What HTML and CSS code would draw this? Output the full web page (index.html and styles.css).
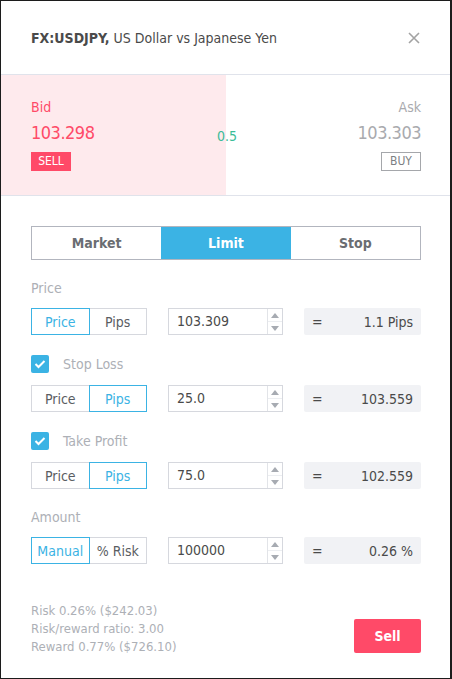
FILE: index.html
```html
<!DOCTYPE html>
<html lang="en">
<head>
<meta charset="utf-8">
<title>FX:USDJPY order</title>
<link rel="stylesheet" href="styles.css">
</head>
<body>
<div class="dialog">
  <header class="header">
    <div class="title"><b>FX:USDJPY,</b> US Dollar vs Japanese Yen</div>
    <svg class="close" width="12" height="12" viewBox="0 0 12 12"><path d="M1 1L11 11M11 1L1 11" stroke="#a3a3a3" stroke-width="1.6" fill="none"/></svg>
  </header>
  <section class="quote">
    <div class="side bid">
      <div class="q-label">Bid</div>
      <div class="q-price">103.298</div>
      <span class="badge sell-badge">SELL</span>
    </div>
    <div class="side ask">
      <div class="q-label">Ask</div>
      <div class="q-price">103.303</div>
      <span class="badge buy-badge">BUY</span>
    </div>
    <div class="spread">0.5</div>
  </section>
  <section class="form">
    <div class="tabs">
      <div class="tab">Market</div>
      <div class="tab active">Limit</div>
      <div class="tab">Stop</div>
    </div>

    <div class="label">Price</div>
    <div class="row">
      <div class="toggle"><span class="tg on">Price</span><span class="tg">Pips</span></div>
      <div class="input"><span class="val">103.309</span><span class="spin"><i class="up"></i><i class="down"></i></span></div>
      <div class="result"><span>=</span><span>1.1 Pips</span></div>
    </div>

    <div class="check-row"><span class="check"><svg width="12" height="10" viewBox="0 0 12 10"><path d="M1.5 5L4.5 8L10.5 2" stroke="#fff" stroke-width="2" fill="none"/></svg></span><span class="check-label">Stop Loss</span></div>
    <div class="row tight">
      <div class="toggle"><span class="tg">Price</span><span class="tg on">Pips</span></div>
      <div class="input"><span class="val">25.0</span><span class="spin"><i class="up"></i><i class="down"></i></span></div>
      <div class="result"><span>=</span><span>103.559</span></div>
    </div>

    <div class="check-row"><span class="check"><svg width="12" height="10" viewBox="0 0 12 10"><path d="M1.5 5L4.5 8L10.5 2" stroke="#fff" stroke-width="2" fill="none"/></svg></span><span class="check-label">Take Profit</span></div>
    <div class="row tight">
      <div class="toggle"><span class="tg">Price</span><span class="tg on">Pips</span></div>
      <div class="input"><span class="val">75.0</span><span class="spin"><i class="up"></i><i class="down"></i></span></div>
      <div class="result"><span>=</span><span>102.559</span></div>
    </div>

    <div class="label">Amount</div>
    <div class="row">
      <div class="toggle"><span class="tg on">Manual</span><span class="tg">% Risk</span></div>
      <div class="input"><span class="val">100000</span><span class="spin"><i class="up"></i><i class="down"></i></span></div>
      <div class="result"><span>=</span><span>0.26 %</span></div>
    </div>

    <div class="footer">
      <div class="info">
        <div>Risk 0.26% ($242.03)</div>
        <div>Risk/reward ratio: 3.00</div>
        <div>Reward 0.77% ($726.10)</div>
      </div>
      <button class="sell-btn">Sell</button>
    </div>
  </section>
</div>
</body>
</html>
```
FILE: styles.css
```css
* { box-sizing: border-box; }
html, body { margin: 0; padding: 0; background: #fff; }
body {
  font-family: "DejaVu Sans Condensed", Tahoma, "DejaVu Sans", sans-serif;
  font-size: 14px;
  color: #4a4a4a;
}
.dialog {
  width: 452px;
  height: 679px;
  border: 1px solid #1c1c1c;
  border-right-width: 2px;
  background: #fff;
}
.header {
  height: 74px;
  border-bottom: 1px solid #e0e3eb;
  display: flex;
  align-items: center;
  justify-content: space-between;
  padding: 0 30px 0 30px;
}
.title { font-size: 14px; color: #4a4a4a; }
.title b { font-weight: bold; }
.close { display: block; }

.quote {
  position: relative;
  display: flex;
  height: 121px;
  border-bottom: 1px solid #e0e3eb;
}
.side { flex: 0 0 225px; padding-top: 22px; }
.bid { background: #feeaed; padding-left: 30px; }
.ask { flex: 1; text-align: right; padding-right: 29px; }
.q-label { line-height: 20px; height: 20px; }
.q-price { font-size: 18px; line-height: 24px; margin-top: 4px; height: 24px; letter-spacing: -0.5px; }
.bid .q-label, .bid .q-price { color: #ff4a68; }
.ask .q-label, .ask .q-price { color: #a9aaae; }
.badge {
  display: inline-block;
  margin-top: 7px;
  width: 40px;
  height: 19px;
  line-height: 19px;
  font-size: 12px;
  text-align: center;
}
.sell-badge { background: #ff4a68; color: #fff; }
.buy-badge { border: 1px solid #a5a7ab; color: #7d7f83; line-height: 17px; }
.spread {
  position: absolute;
  left: 216px;
  top: 51px;
  width: 20px;
  text-align: center;
  color: #3cbc98;
  font-size: 14px;
  line-height: 20px;
}

.form { padding: 30px 29px 0 30px; }
.tabs {
  display: grid;
  grid-template-columns: repeat(3, 1fr);
  height: 34px;
  border: 1px solid #b2b5be;
}
.tab {
  display: flex;
  align-items: center;
  justify-content: center;
  font-weight: bold;
  color: #6a6d72;
}
.tab.active { background: #3bb3e4; color: #fff; }

.label {
  margin-top: 18px;
  height: 20px;
  line-height: 20px;
  color: #adb0b6;
}
.row {
  margin-top: 10px;
  display: grid;
  grid-template-columns: 116px 115px 117px;
  column-gap: 21px;
  height: 27px;
}
.row.tight { margin-top: 12px; }
.toggle { display: flex; height: 27px; }
.tg {
  flex: 1;
  display: flex;
  align-items: center;
  justify-content: center;
  border: 1px solid #d6d8de;
  color: #5a5d62;
}
.tg + .tg { margin-left: -1px; }
.tg.on { border-color: #3bb3e4; color: #3bb3e4; position: relative; z-index: 1; }

.input {
  display: flex;
  border: 1px solid #d6d8de;
  height: 27px;
}
.val { flex: 1; padding-left: 8px; line-height: 25px; color: #4a4a4a; }
.spin {
  width: 15px;
  border-left: 1px solid #e2e4e8;
  display: flex;
  flex-direction: column;
}
.spin i {
  flex: 1;
  display: flex;
  align-items: center;
  justify-content: center;
}
.spin i.up { border-bottom: 1px solid #eceef1; }
.spin i::before {
  content: "";
  display: block;
  width: 0;
  height: 0;
  border-left: 4px solid transparent;
  border-right: 4px solid transparent;
}
.spin i.up::before { border-bottom: 5px solid #a7abb2; }
.spin i.down::before { border-top: 5px solid #a7abb2; }

.result {
  display: flex;
  justify-content: space-between;
  align-items: center;
  background: #f1f2f5;
  border-radius: 2px;
  padding: 0 8px 0 8px;
  color: #4a4a4a;
}

.check-row {
  margin-top: 20px;
  height: 18px;
  display: flex;
  align-items: center;
}
.check {
  width: 18px;
  height: 18px;
  border-radius: 2px;
  background: #3bb3e4;
  display: flex;
  align-items: center;
  justify-content: center;
}
.check-label { margin-left: 14px; color: #adb0b6; }

.footer {
  margin-top: 38px;
  display: flex;
  justify-content: space-between;
  align-items: flex-end;
}
.info { line-height: 18px; font-size: 13px; color: #adb0b6; }
.sell-btn {
  width: 67px;
  height: 34px;
  margin-bottom: 3px;
  border: 0;
  border-radius: 2px;
  background: #ff4a68;
  color: #fff;
  font-family: inherit;
  font-size: 14px;
  font-weight: bold;
}
```
